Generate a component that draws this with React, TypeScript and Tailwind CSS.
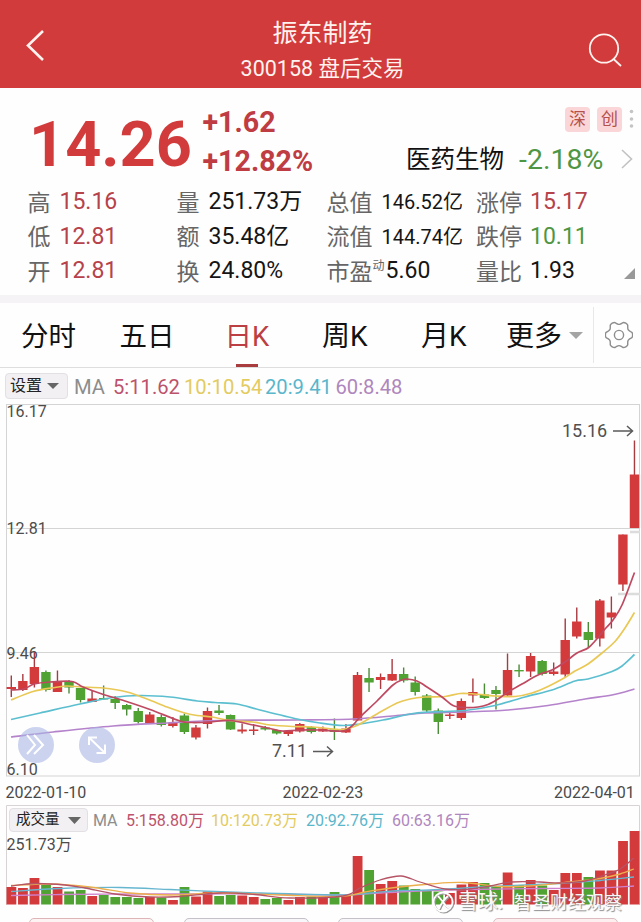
import React from "react";

type Candle = [high: number, open: number, close: number, low: number, up: 0 | 1, volumeTop: number];
type Pt = [number, number];

const RED = "#d23a3c";
const GREEN = "#50a232";

// Pixel rows on the price pane: wick top, body top, body bottom, wick bottom, rising flag, volume bar top.
const candles: Candle[] = [
  [675.5, 687, 689, 697, 1, 887], [674, 681, 690, 691, 1, 888], [652, 667, 684, 687.5, 1, 878],
  [670.5, 672, 690, 691.5, 0, 885], [670.5, 681, 692, 692, 1, 887], [680, 681, 687.5, 693.5, 0, 891.5],
  [688, 688, 700, 702.5, 0, 890], [691, 698.5, 702, 702, 1, 896], [685.5, 698, 699.5, 699.5, 0, 895],
  [696, 699, 703, 709, 0, 897], [704, 705, 709.5, 715.5, 0, 897], [708, 711, 722, 723.5, 0, 898],
  [712, 714.5, 723.5, 724, 1, 897], [715, 717, 725, 726.5, 0, 897.5], [717, 723, 726, 727.5, 1, 900],
  [713.5, 715.5, 732, 734, 0, 887], [725, 727.5, 737.5, 739.5, 1, 896.5], [707.5, 711, 724, 728.5, 1, 891.5],
  [705, 710.5, 713, 715, 0, 896], [714.5, 715, 729.5, 730, 0, 895], [723.5, 729.5, 731.5, 733.5, 1, 895.5],
  [724, 729.5, 731, 735, 1, 897], [726, 727.5, 729.5, 730.5, 0, 899], [729.5, 730, 733.5, 734.5, 0, 898],
  [730, 731, 734, 736, 1, 900], [723, 724, 731.5, 732.5, 1, 897], [726, 727, 732, 733.5, 0, 896.5],
  [726.5, 728.5, 731.5, 732, 1, 898], [718.5, 729.5, 732, 740, 0, 892], [724, 728.5, 732.5, 733, 1, 896],
  [672, 675, 720.5, 721, 1, 856], [668, 678, 682.5, 692, 0, 870], [673.5, 677, 680, 689, 1, 884],
  [659, 674, 680.5, 681, 1, 881], [667.5, 674, 680.5, 682.5, 0, 885.5], [676.5, 682.5, 692, 695.5, 0, 889],
  [694, 695.5, 710.5, 712, 0, 890], [708.5, 710.5, 722, 734, 0, 891.5], [711, 714.5, 716, 719, 1, 893],
  [698.5, 701, 718, 720, 1, 884.5], [678.5, 692, 695.5, 702.5, 1, 882], [683.5, 694.5, 698, 699, 0, 883],
  [686, 690, 694, 709.5, 0, 887], [653.5, 670, 695.5, 696.5, 1, 872.5], [664.5, 670, 671.2, 677, 0, 885],
  [653, 656, 671.5, 677, 1, 880], [660, 661, 674, 675.5, 0, 885.5], [662.5, 671.5, 674, 675.5, 1, 890],
  [618.5, 640, 674.5, 677, 1, 873], [607.5, 621.5, 636.5, 638.5, 1, 873], [622, 632, 640, 648, 0, 877],
  [599, 600.5, 638.5, 646.5, 1, 870.5], [596.5, 612.5, 617.5, 628.5, 1, 870.5],
  [534.5, 534.5, 584.5, 591, 1, 841], [440.5, 474.5, 528, 528, 1, 831],
];

const priceLines: { color: string; pts: Pt[] }[] = [
  {
    color: "#b583cb",
    pts: [[11, 737], [53, 732], [113, 726], [167, 723], [220, 720.5], [297, 720], [353, 719], [397, 715.5], [425, 713], [465, 712], [508, 710], [548, 705.5], [585, 699], [612, 695], [634.5, 689]],
  },
  {
    color: "#5cbfd0",
    pts: [[11, 719.5], [40, 713], [80, 704], [113, 697.5], [140, 695.5], [170, 697], [197, 701], [215, 702.5], [237, 704], [260, 710], [297, 719], [320, 723], [343, 725.5], [360, 724], [383, 720], [410, 714], [430, 712], [465, 710.5], [495, 705.5], [525, 697], [552, 690], [575, 681], [588, 679], [612, 671.5], [622, 666], [634.5, 654.5]],
  },
  {
    color: "#e9c856",
    pts: [[11, 700], [33, 691.5], [55, 687.5], [67, 686], [82, 687], [103, 688], [127, 692], [147, 699], [167, 707], [183, 712.5], [197, 715.5], [212, 717], [230, 720.5], [253, 722], [270, 725], [293, 726.5], [313, 727], [333, 729], [343, 729.5], [357, 725.5], [377, 714], [397, 703], [410, 699], [425, 697], [445, 696.5], [460, 693.5], [475, 694], [495, 696], [515, 696.5], [532, 693], [548, 686.5], [565, 677.5], [575, 671], [588, 664], [602, 653], [615, 641.5], [625, 628], [634.5, 612.5]],
  },
  {
    color: "#bf4961",
    pts: [[11, 690], [24, 689], [34, 684], [50, 682], [72, 681.5], [83, 687], [102, 694], [125, 701], [150, 709.5], [180, 721], [192, 722.5], [210, 722], [230, 720.5], [253, 725], [270, 728.5], [282, 731], [300, 730], [320, 730], [343, 731], [353, 725], [360, 717], [377, 701], [393, 685], [402, 680], [407, 679], [417, 681], [425, 685.7], [442, 697], [453, 705.5], [465, 707.5], [478, 707], [488, 704.5], [498, 699], [508, 692], [522, 684], [538, 675], [552, 670], [565, 662], [577, 653], [588, 648], [595, 641], [605, 629], [613, 620], [622, 605], [634.5, 572.5]],
  },
];

const volumeLines: { color: string; pts: Pt[] }[] = [
  { color: "#cf82cd", pts: [[11, 895.5], [60, 894.5], [130, 894], [200, 894], [270, 894], [345, 895], [380, 893], [430, 890.5], [470, 889.5], [540, 888.5], [600, 888], [634, 886]] },
  { color: "#66b6cf", pts: [[11, 891.5], [60, 888.5], [120, 887.5], [170, 889.5], [215, 891.5], [260, 893], [340, 895], [370, 893], [400, 890.5], [430, 890], [490, 886.5], [560, 883.5], [600, 880.5], [634, 877]] },
  { color: "#ecaf4c", pts: [[11, 885.5], [50, 884], [90, 887], [130, 893], [170, 895], [220, 893], [280, 895], [340, 896.5], [365, 892], [395, 887.5], [430, 884], [463, 882.5], [500, 886.5], [530, 886], [570, 882], [600, 878.5], [620, 874], [634, 869]] },
  { color: "#b65465", pts: [[11, 886], [35, 883.5], [65, 885], [85, 888], [115, 894], [150, 897], [180, 896.5], [220, 893], [255, 894.5], [290, 898], [343, 896], [360, 888], [380, 880], [401, 876], [420, 882], [445, 889], [470, 889], [490, 886], [512, 882], [540, 882], [560, 883], [585, 881], [605, 875], [620, 869], [634, 858]] },
];

const xAt = (i: number) => 11.3 + i * 11.54;

// Catmull-Rom interpolation expressed as cubic Béziers.
function smooth(p: Pt[]) {
  let d = `M${p[0][0]} ${p[0][1]}`;
  for (let i = 0; i < p.length - 1; i++) {
    const a = p[Math.max(0, i - 1)];
    const b = p[i];
    const c = p[i + 1];
    const e = p[Math.min(p.length - 1, i + 2)];
    d += `C${b[0] + (c[0] - a[0]) / 6} ${b[1] + (c[1] - a[1]) / 6} ${c[0] - (e[0] - b[0]) / 6} ${c[1] - (e[1] - b[1]) / 6} ${c[0]} ${c[1]}`;
  }
  return d;
}

function Caret({ className }: { className: string }) {
  return (
    <svg viewBox="0 0 14 7" preserveAspectRatio="none" className={className}>
      <path d="M0 0H14L7 7Z" fill="currentColor" />
    </svg>
  );
}

function Header() {
  return (
    <header className="flex h-[88px] items-start bg-[#d23b3b] text-[#fff3f0]">
      <svg width="72" height="88" className="shrink-0" fill="none" stroke="currentColor" strokeWidth="2.6">
        <path d="M43 31L28 45.5L43 60" />
      </svg>
      <div className="flex w-[501px] flex-col items-center">
        <h1 className="mt-[16px] text-[25px] leading-[36px]">振东制药</h1>
        <p className="mt-[2px] text-[21.5px] leading-[30px] whitespace-pre">300158 盘后交易</p>
      </div>
      <svg width="68" height="88" className="shrink-0" fill="none" stroke="currentColor" strokeWidth="1.8">
        <circle cx="31" cy="48.5" r="14.2" />
        <path d="M40 58.5L48 66" />
      </svg>
    </header>
  );
}

type Stat = { label: string; value: string; tone: string };
const statRows: Stat[][] = [
  [
    { label: "高", value: "15.16", tone: "text-[#b6424a]" },
    { label: "量", value: "251.73万", tone: "text-[#151515]" },
    { label: "总值", value: "146.52亿", tone: "text-[#151515]" },
    { label: "涨停", value: "15.17", tone: "text-[#b6424a]" },
  ],
  [
    { label: "低", value: "12.81", tone: "text-[#b6424a]" },
    { label: "额", value: "35.48亿", tone: "text-[#151515]" },
    { label: "流值", value: "144.74亿", tone: "text-[#151515]" },
    { label: "跌停", value: "10.11", tone: "text-[#4f9644]" },
  ],
  [
    { label: "开", value: "12.81", tone: "text-[#b6424a]" },
    { label: "换", value: "24.80%", tone: "text-[#151515]" },
    { label: "市盈", value: "5.60", tone: "text-[#151515]" },
    { label: "量比", value: "1.93", tone: "text-[#151515]" },
  ],
];

function StatCell({ s, col }: { s: Stat; col: number }) {
  const labelWidth = col < 2 ? "w-8" : col === 2 ? (s.label === "市盈" ? "w-[59px]" : "w-[55px]") : "w-[54px]";
  const size = s.value.startsWith("14") ? "text-[20px]" : "text-[23px]";
  return (
    <div className="flex h-full items-center whitespace-nowrap">
      <span className={`${labelWidth} flex shrink-0 pt-[3px] text-[23px] leading-[30px] text-[#666]`}>
        {s.label}
        {s.label === "市盈" && <sup className="top-0 -mt-1 text-[12px] leading-[24px]">动</sup>}
      </span>
      <span className={`${size} ${s.tone} leading-[30px]`}>{s.value}</span>
    </div>
  );
}

function Quote() {
  return (
    <section className="relative h-[207px] pt-[14px]">
      <div className="flex h-[81px]">
        <div className="flex w-[320px] pl-[29px]">
          <span className="w-[173.5px] pt-[8px] text-[63px] leading-[70px] font-bold text-[#d23b3b]">14.26</span>
          <div className="flex flex-col text-[28.6px] font-bold text-[#be3c42]">
            <span className="h-[39px] leading-[41px]">+1.62</span>
            <span className="h-[39px] leading-[41px]">+12.82%</span>
          </div>
        </div>
        <div className="flex flex-1 flex-col">
          <div className="flex justify-end gap-[7px] pt-[5px] pr-[7px]">
            <span className="h-[25px] w-[25px] rounded bg-[#fad6d8] text-center text-[17px] leading-[25px] text-[#b5504a]">深</span>
            <span className="h-[25px] w-[25px] rounded bg-[#fad6d8] text-center text-[17px] leading-[25px] text-[#b5504a]">创</span>
            <svg width="5" height="25" fill="#c4c4c4">
              <circle cx="2.5" cy="4.5" r="1.8" />
              <circle cx="2.5" cy="12" r="1.8" />
              <circle cx="2.5" cy="19" r="1.8" />
            </svg>
          </div>
          <div className="mt-[9px] flex h-[36px] items-center pl-[86px] whitespace-nowrap">
            <span className="w-[113px] pt-[2px] text-[24.5px] leading-[36px] text-[#111]">医药生物</span>
            <span className="w-[102px] pt-[2px] text-[28.5px] leading-[36px] text-[#4f9644]">-2.18%</span>
            <svg width="12" height="20" fill="none" stroke="#c2c2c2" strokeWidth="1.6">
              <path d="M1 1L10.5 10L1 19" />
            </svg>
          </div>
        </div>
      </div>
      <div className="mt-[2px] pl-[27.5px]">
        {statRows.map((row, i) => (
          <div key={i} className="grid h-[34.5px] grid-cols-[149px_150px_149.5px_140px]">
            {row.map((s, col) => (
              <StatCell key={s.label} s={s} col={col} />
            ))}
          </div>
        ))}
      </div>
      <svg width="11" height="11" className="absolute right-[6px] bottom-[16px]">
        <path d="M11 0V11H0Z" fill="#999" />
      </svg>
    </section>
  );
}

function Gear() {
  const teeth = 6;
  const pts: Pt[] = [];
  for (let i = 0; i < teeth; i++) {
    for (const [offset, r] of [[-0.26, 12.2], [-0.17, 13.3], [0, 13.6], [0.17, 13.3], [0.26, 12.2], [0.4, 10.9], [0.5, 10.6], [0.6, 10.9]]) {
      const a = ((i + offset) / teeth) * Math.PI * 2;
      pts.push([14 + Math.cos(a) * r, 14 + Math.sin(a) * r]);
    }
  }
  return (
    <svg width="28" height="28" fill="none" stroke="#8d8d8d" strokeWidth="1.4" strokeLinejoin="round">
      <path d={smooth([...pts, pts[0]])} />
      <circle cx="14" cy="14" r="4.6" />
    </svg>
  );
}

function Tabs() {
  return (
    <nav className="flex h-[65px] items-center border-b border-[#dedede] text-[27.5px] whitespace-nowrap text-[#111]">
      <span className="w-[98px] shrink-0 pt-[3px] pl-[21px] leading-[40px]">分时</span>
      <span className="w-[104px] shrink-0 pt-[3px] pl-[21.5px] leading-[40px]">五日</span>
      <span className="relative flex h-full w-[90px] shrink-0 justify-center leading-[67px] text-[#bb3f43]">
        日K
        <i className="absolute bottom-0 left-[34px] h-[3.5px] w-[22px] bg-[#a83c3e]" />
      </span>
      <span className="w-[98px] shrink-0 pt-[3px] pl-[30px] text-[28px] leading-[40px]">周K</span>
      <span className="w-[116px] shrink-0 pt-[3px] pl-[31px] text-[28px] leading-[40px]">月K</span>
      <span className="flex w-[87px] shrink-0 items-center text-[28px] leading-[40px]">
        <span className="pt-[3px]">更多</span>
        <Caret className="ml-[6.5px] h-[7px] w-[14px] text-[#a4a4a4]" />
      </span>
      <div className="flex h-[56px] flex-1 items-center border-l border-[#e8e8e8] pl-[11px]">
        <Gear />
      </div>
    </nav>
  );
}

function PriceLegend() {
  return (
    <div className="flex h-9 items-center pl-[5px] text-[20.2px] whitespace-nowrap">
      <div className="flex h-[26px] w-[63px] items-center rounded-[4px] border border-[#e2e0e2] bg-[#f2f0f2] pl-[4px] text-[16px] text-[#222]">
        设置
        <Caret className="ml-[5px] h-[6px] w-[12px] text-[#666]" />
      </div>
      <span className="ml-[6px] w-[39px] pt-[2px] text-[#8d8d8d]">MA</span>
      <span className="w-[71px] pt-[2px] text-[#bd526c]">5:11.62</span>
      <span className="w-[81px] pt-[2px] text-[#e3cb60]">10:10.54</span>
      <span className="w-[70.5px] pt-[2px] text-[#59b6cb]">20:9.41</span>
      <span className="pt-[2px] text-[#af86bd]">60:8.48</span>
    </div>
  );
}

function PriceChart() {
  return (
    <svg width="641" height="373" viewBox="0 404 641 373" className="block overflow-visible">
      <g fill="none" stroke="#d4d4d4">
        <rect x="6.5" y="404.5" width="633" height="371.5" />
        <path d="M6 528.5H640M6 652.5H640" />
        <path d="M630 532H640M618 594H640" stroke="#dcdcdc" strokeWidth="2.5" />
      </g>
      <g fill="#4c4c4c" fontSize="16">
        <text x="6.5" y="417">16.17</text>
        <text x="6.5" y="534">12.81</text>
        <text x="6.5" y="659">9.46</text>
        <text x="6.5" y="775">6.10</text>
      </g>
      {candles.map(([h, o, c, l, up], i) => {
        const x = xAt(i);
        return (
          <g key={i} fill={up ? RED : GREEN}>
            <rect x={x - 0.7} y={h} width="1.4" height={l - h} fill={up ? "#a93b40" : "#4b8b38"} />
            <rect x={x - 4.7} y={o} width="9.4" height={Math.max(1.4, c - o)} />
          </g>
        );
      })}
      {priceLines.map((l) => (
        <path key={l.color} d={smooth(l.pts)} fill="none" stroke={l.color} strokeWidth="1.7" />
      ))}
      <g fill="#505050" fontSize="18">
        <text x="562" y="436.5">15.16</text>
        <text x="272" y="756.5">7.11</text>
      </g>
      <g fill="none" stroke="#5a5a5a" strokeWidth="1.5">
        <path d="M613 431H632M627 426L632.5 431L627 436" />
        <path d="M313 751.5H332M327 746.5L332.5 751.5L327 756.5" />
      </g>
      <g fill="#a9b6e4" fillOpacity="0.6">
        <circle cx="36" cy="745" r="18" />
        <circle cx="97" cy="745" r="18" />
      </g>
      <g fill="none" stroke="#fff" strokeWidth="2">
        <path d="M27 735L35 745L27 754M34 735L43 745L34 754" />
        <path d="M89.5 738L104 752M89 745V737.5H97M105 744.5V753H96.5" />
      </g>
    </svg>
  );
}

function VolumePanel() {
  return (
    <section className="relative h-[100px]">
      <svg width="641" height="100" viewBox="0 805 641 100" className="block">
        <path d="M6.5 905V805.5H639.5V905" fill="none" stroke="#d8d4d6" />
        {candles.map(([, , , , up, top], i) => (
          <rect key={i} x={xAt(i) - 4.8} y={top} width="9.8" height={904.5 - top} fill={up ? RED : GREEN} />
        ))}
        {volumeLines.map((l) => (
          <path key={l.color} d={smooth(l.pts)} fill="none" stroke={l.color} strokeWidth="1.3" />
        ))}
        <text x="6.5" y="849.5" fontSize="16" fill="#4c4c4c">251.73万</text>
      </svg>
      <div className="absolute top-[3px] left-[9px] flex h-6 items-center text-[16px] whitespace-nowrap">
        <div className="flex h-6 w-[79px] items-center rounded-[4px] border border-[#e2e0e2] bg-[#f2f0f2] pl-[6px] text-[14.5px] text-[#222]">
          成交量
          <Caret className="ml-[8px] h-[7px] w-[13px] text-[#666]" />
        </div>
        <span className="ml-[5px] w-[33px] pt-[2px] text-[#8d8d8d]">MA</span>
        <span className="w-[85px] pt-[2px] text-[#bd526c]">5:158.80万</span>
        <span className="w-[95px] pt-[2px] text-[#e3cb60]">10:120.73万</span>
        <span className="w-[86px] pt-[2px] text-[#59b6cb]">20:92.76万</span>
        <span className="pt-[2px] text-[#af86bd]">60:63.16万</span>
      </div>
    </section>
  );
}

function Watermark() {
  return (
    <div className="absolute top-[889px] left-[432px] flex h-[26px] items-center text-[18px] whitespace-nowrap text-white/95 [text-shadow:1px_1px_1px_#888]">
      <svg width="23" height="23" viewBox="0 0 23 23" fill="none" stroke="#fff" strokeWidth="1.8" className="drop-shadow-[1px_1px_0.5px_#999]">
        <circle cx="11" cy="11" r="9.5" />
        <path d="M6 5L11 11Q13 15 17 17M16 5Q10 10 7 18" />
      </svg>
      <span className="ml-[3px] w-[56px] text-[20px]">雪球:</span>
      <span>智圣财经观察</span>
    </div>
  );
}

export default function App() {
  return (
    <main className="relative h-[922px] w-[641px] overflow-hidden bg-[#fefefe] font-[Roboto,'Noto_Sans_CJK_SC',sans-serif]">
      <Header />
      <Quote />
      <div className="h-2 bg-[#f5f3f5]" />
      <Tabs />
      <PriceLegend />
      <PriceChart />
      <div className="flex h-7 items-center pt-[4px] pl-[5.5px] text-[16px] text-[#4a4a4a]">
        <span className="w-[277px]">2022-01-10</span>
        <span className="w-[271.5px]">2022-02-23</span>
        <span>2022-04-01</span>
      </div>
      <VolumePanel />
      <div className="flex gap-[29.5px] pt-[13px] pl-[29px]">
        <span className="h-6 w-[125px] shrink-0 rounded-[5px] border border-[#ddb5b8] bg-[#fdf3f3]" />
        <span className="h-6 w-[125px] shrink-0 rounded-[5px] border border-[#c6c0c8] bg-[#f8f6f9]" />
        <span className="h-6 w-[125px] shrink-0 rounded-[5px] border border-[#c6c0c8] bg-[#f8f6f9]" />
        <span className="h-6 w-[125px] shrink-0 rounded-[5px] border border-[#dcbcc0] bg-[#fdeff0]" />
      </div>
      <Watermark />
    </main>
  );
}
